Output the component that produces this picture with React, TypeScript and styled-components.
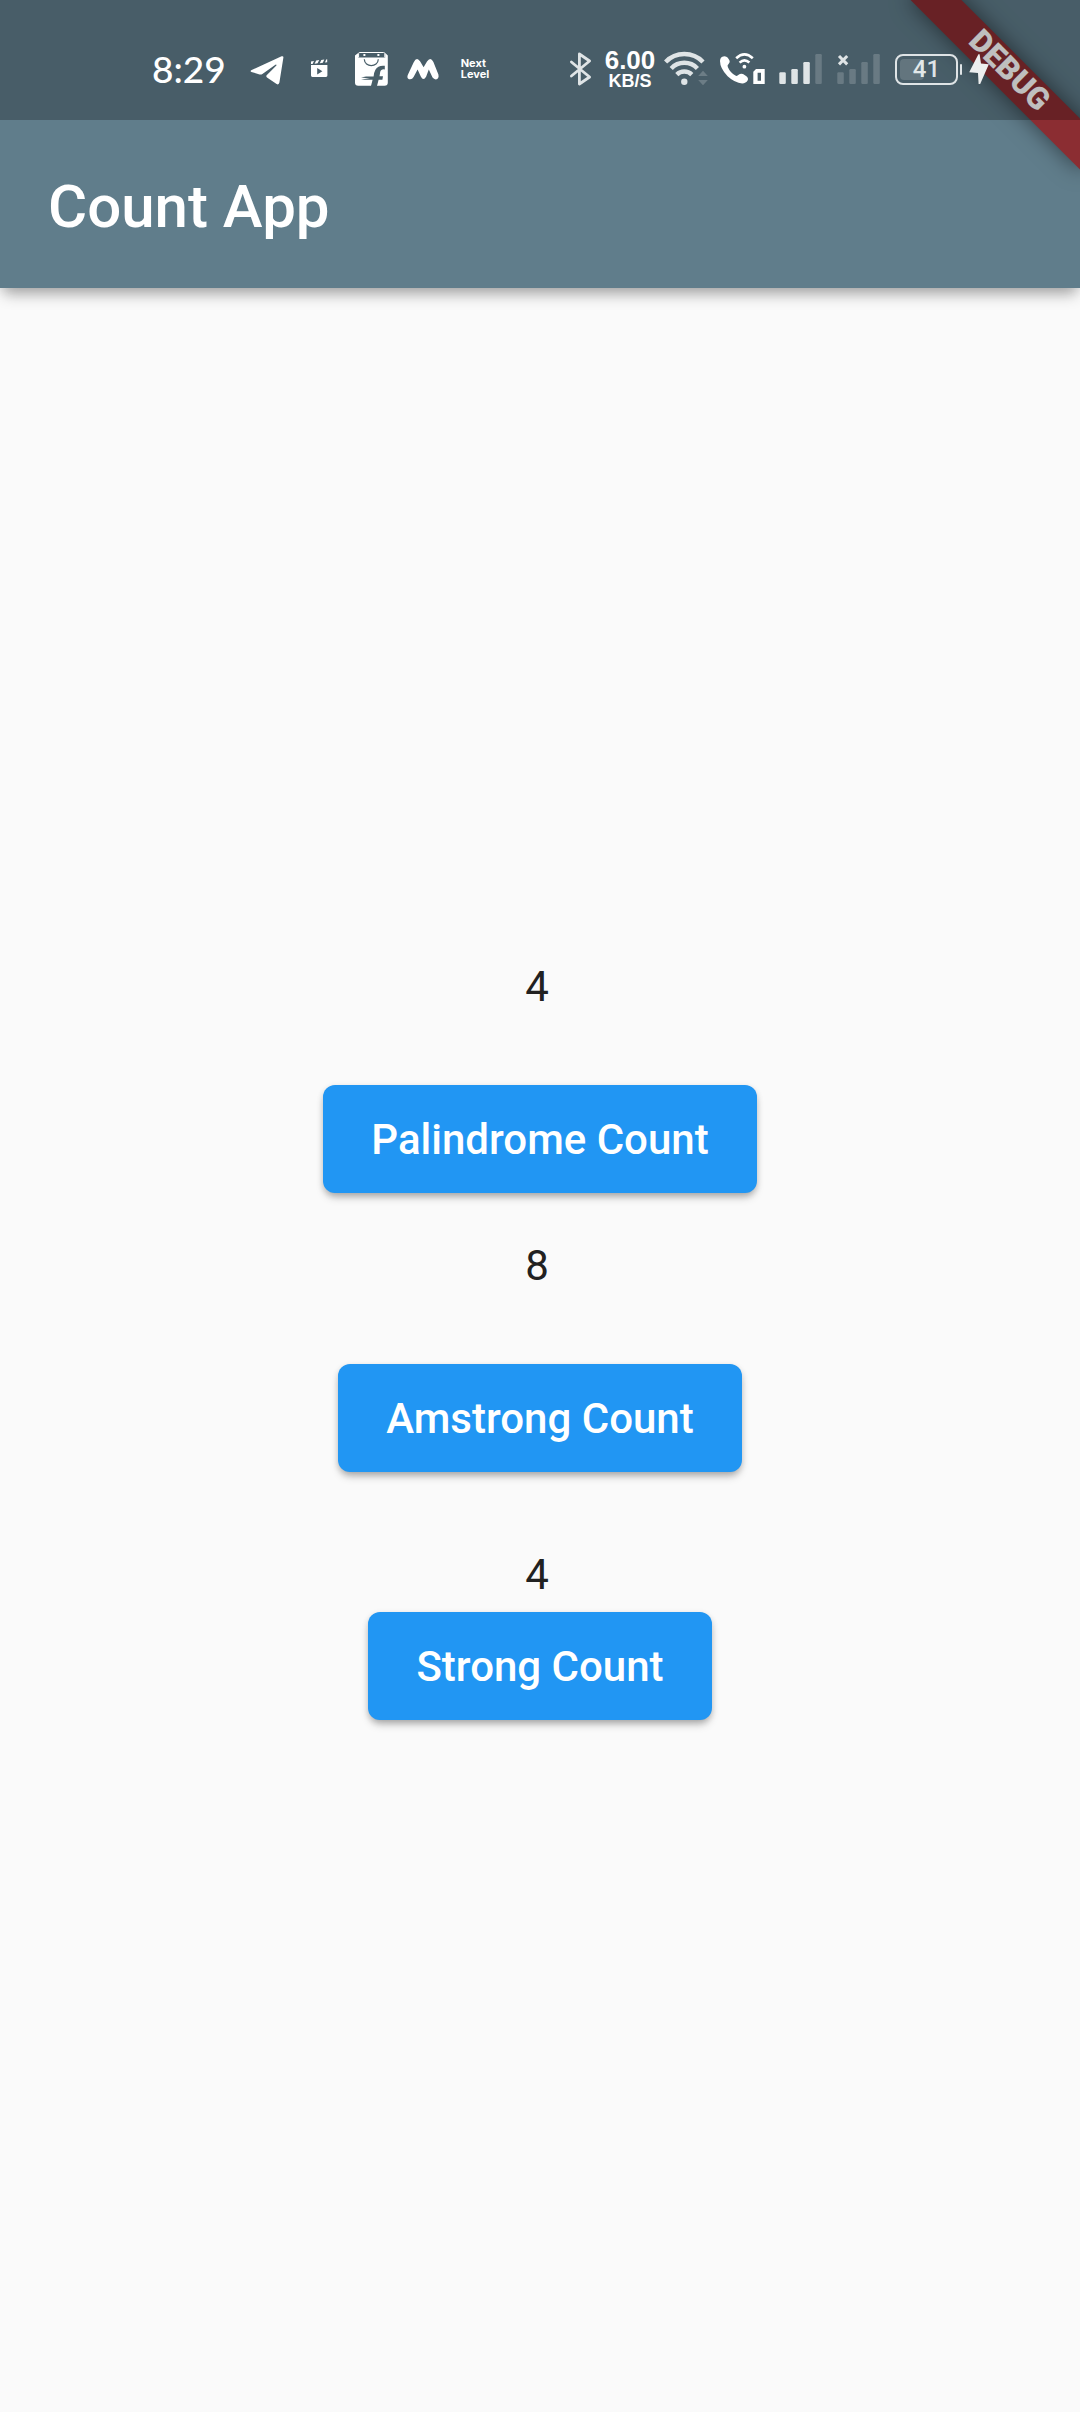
import React from "react";
import styled, { createGlobalStyle } from "styled-components";

const GlobalStyle = createGlobalStyle`
  *, *::before, *::after { box-sizing: border-box; }
  body {
    margin: 0;
    background: #fafafa;
    font-family: Roboto, "Noto Sans", sans-serif;
  }
`;

const Screen = styled.div`
  display: flex;
  flex-direction: column;
  min-height: 100vh;
  background: #fafafa;
`;

const Header = styled.header`
  position: relative;
  overflow: hidden;
  background: #607d8b;
  box-shadow: 0 10px 14px -4px rgba(0, 0, 0, 0.3), 0 2px 12px rgba(0, 0, 0, 0.1);
`;

const StatusBar = styled.div`
  position: relative;
  z-index: 1;
  display: flex;
  align-items: center;
  justify-content: space-between;
  height: 120px;
  padding: 18px 91px 0 152px;
  background: rgba(0, 0, 0, 0.25);
  color: #fff;
`;

const Cluster = styled.div<{ $gap: number }>`
  display: flex;
  align-items: center;
  gap: ${(p) => p.$gap}px;
`;

const Clock = styled.time`
  font: 500 37px/40px Lato, sans-serif;
`;

const Notice = styled.span`
  width: 36px;
  padding-left: 3px;
  font: 700 11px/11px Inter, sans-serif;
`;

const Speed = styled.div`
  display: flex;
  flex-direction: column;
  align-items: center;
  width: 54px;
`;

const SpeedValue = styled.span`
  font: 700 26px/24px "Liberation Sans", sans-serif;
`;

const SpeedUnit = styled.span`
  font: 700 18px/18px "Liberation Sans", sans-serif;
`;

const Battery = styled.div`
  display: flex;
  align-items: center;
  gap: 2px;
  width: 74px;
  padding-left: 6px;
`;

const BatteryCase = styled.div`
  position: relative;
  display: flex;
  align-items: center;
  justify-content: center;
  width: 63px;
  height: 31px;
  border: 2px solid #dfe4e6;
  border-radius: 8px;
  color: #dfe4e6;
  font-size: 24px;
  font-weight: 500;
  line-height: 24px;
`;

const BatteryLevel = styled.div`
  position: absolute;
  top: 3px;
  bottom: 3px;
  left: 3px;
  border-radius: 4px;
  background: rgba(255, 255, 255, 0.15);
`;

const BatteryTip = styled.div`
  width: 2px;
  height: 11px;
  border-radius: 1px;
  background: #dfe4e6;
`;

const Ribbon = styled.div`
  position: absolute;
  top: 54px;
  right: -48px;
  width: 240px;
  height: 36px;
  transform: rotate(45deg);
  background: #8b2d32;
  box-shadow: 0 0 22px rgba(0, 0, 0, 0.5);
  color: #fff;
  font-size: 31px;
  font-weight: 900;
  line-height: 32px;
  text-align: center;
`;

const TitleBar = styled.div`
  display: flex;
  align-items: center;
  height: 168px;
  padding: 6px 48px 0;
`;

const Title = styled.h1`
  margin: 0;
  color: #fff;
  font-size: 60px;
  font-weight: 500;
  line-height: 72px;
`;

const Content = styled.main`
  flex: 1;
  display: flex;
  flex-direction: column;
  align-items: center;
  justify-content: center;
  padding-bottom: 18px;
`;

const Counter = styled.section<{ $before: number; $gap: number }>`
  display: flex;
  flex-direction: column;
  align-items: center;
  gap: ${(p) => p.$gap}px;
  margin-top: ${(p) => p.$before}px;
`;

const Count = styled.output`
  padding-right: 6px;
  color: #212121;
  font-size: 42px;
  line-height: 49px;
`;

const CountButton = styled.button`
  height: 108px;
  padding: 0 48px;
  border: 0;
  border-radius: 12px;
  background: #2196f3;
  box-shadow: 0 6px 8px -2px rgba(0, 0, 0, 0.26), 0 2px 6px rgba(0, 0, 0, 0.14);
  color: #fff;
  font-family: inherit;
  font-size: 42px;
  font-weight: 500;
  line-height: 49px;
  cursor: pointer;
`;

const Glyph = styled.svg`
  display: block;
  flex: none;
  overflow: visible;
`;

const SOFT = "#dfe4e6";
const SHADE = "#485e68";

function TelegramIcon() {
  return (
    <Glyph width="36" height="34" viewBox="0 0 36 34" fill="#fff" aria-hidden="true">
      <path d="M1.2 18.3 31.6 4.3Q33.6 3.7 33.4 5.6L29.4 30.6Q28.8 33.2 26.6 32L17 25.4Q15.6 24.4 16.9 23.1L26.4 13.6Q26.8 12.2 25.4 12.8L12.4 22Q11 22.9 9.6 22.4L1.4 20Q-.2 19.2 1.2 18.3Z" />
    </Glyph>
  );
}

function ClapperIcon() {
  return (
    <Glyph width="36" height="34" viewBox="0 0 36 34" fill="#fff" aria-hidden="true">
      <path d="M9 9.5 12 9 10.6 12H9ZM14.2 8.6 17.2 8 15.6 11.3 12.6 11.8ZM19.3 8 22.3 7.4 20.8 10.8 17.8 11.2ZM24.2 7.4 25.2 7.2V10.2L23 10.6Z" />
      <path fillRule="evenodd" d="M9 13H25.4V23.6Q25.4 25 24 25H10.4Q9 25 9 23.6ZM15.2 16V22.4L20.4 19.2Z" />
    </Glyph>
  );
}

function BagIcon() {
  return (
    <Glyph width="36" height="34" viewBox="0 0 36 34" fill="none" aria-hidden="true">
      <path d="M4.6 5.3V1.6Q4.6.5 5.8.5H29.6Q30.8.5 30.8 1.6V5.3" stroke="#fff" strokeWidth="1" />
      <rect x="9.4" y="2" width="2" height="2" fill="#fff" />
      <rect x="23.4" y="2" width="2" height="2" fill="#fff" />
      <path d="M1 3.5 4.2 1V5.6H31.2V1L33.8 3.5V30.6Q33.8 33.8 30.6 33.8H4.2Q1 33.8 1 30.6Z" fill="#fff" />
      <path d="M10.3 7.2C10.6 15.8 24 15.8 24.3 7.2" stroke={SHADE} strokeWidth="1.2" />
      <path d="M30.8 13.8V17.4Q27 16.8 26.2 20L25.5 24.2H29L28.4 27.8H24.6L23 34H17L18.6 27.8H11L7 27.2 16 26.4 7 25.4 12 24.4H19.6Q20 20.4 21.4 17.8 24.2 13 30.8 13.8Z" fill={SHADE} />
    </Glyph>
  );
}

function MIcon() {
  return (
    <Glyph width="36" height="34" viewBox="0 0 36 34" aria-hidden="true">
      <path
        d="M2 22.5 7.6 10.4Q10.8 4 14.2 9.6L17.6 15.2 21 9.6Q24.4 4 27.4 10L32.4 22.4Q33.4 26.6 29.8 27.4 27 27.4 25.6 23.6L22.8 17.4 20.2 24.6Q17.4 29.6 14.8 24.6L11.6 17.4 7.6 25Q6 28 3 27.2.4 26 2 22.5Z"
        fill="#fff"
      />
    </Glyph>
  );
}

function BluetoothIcon() {
  return (
    <Glyph width="28" height="34" viewBox="0 0 28 34" fill="none" stroke={SOFT} strokeWidth="2.8" strokeLinecap="round" strokeLinejoin="round" aria-hidden="true">
      <path d="M2.4 10 20.6 25 10.4 32V2L20.6 9 2.4 24" />
    </Glyph>
  );
}

function WifiIcon() {
  return (
    <Glyph width="46" height="34" viewBox="0 0 46 34" fill="none" aria-hidden="true">
      <g stroke={SOFT} strokeWidth="4.4">
        <path d="M2.6 10A26 26 0 0 1 40 10" />
        <path d="M8.2 16.4A18 18 0 0 1 34.4 16.4" />
        <path d="M13.8 22.6A10.6 10.6 0 0 1 28.8 22.6" />
      </g>
      <circle cx="21.3" cy="29.7" r="3.2" fill={SOFT} />
      <path d="M35.2 24 40 18.8 44.8 24ZM35.2 28H44.8L40 33.2Z" fill="#fff" opacity=".2" />
    </Glyph>
  );
}

function WifiCallIcon() {
  return (
    <Glyph width="52" height="34" viewBox="0 0 52 34" fill="none" aria-hidden="true">
      <path
        d="M5 9Q5 5.2 8.2 4.4 11 3.6 12.8 5.8L14.4 8.2Q15.6 10.4 13.6 12 12 13.2 12.8 15 15 20.4 20.4 23.6 22 24.6 23.6 22.8 25.6 21 28 22L31.4 24.2Q33.8 26 32.6 28.6 31 31.4 27.2 31.4 20 31 12.6 24.2 5 16.4 5 9Z"
        fill="#fff"
      />
      <path d="M21.2 6.2Q29.4-1.6 37.8 6.2M24.6 10.6Q29.4 6.2 34.4 10.6" stroke="#fff" strokeWidth="2.6" />
      <circle cx="29.4" cy="14.7" r="1.9" fill="#fff" />
      <path fillRule="evenodd" d="M41 17H49.7V32H38.3V19.7ZM42.6 20.8V28.8H46V20.8Z" fill="#fff" />
    </Glyph>
  );
}

const BARS = [
  { x: 6.3, y: 20.3 },
  { x: 18.3, y: 17 },
  { x: 30.3, y: 10 },
  { x: 42.3, y: 2 },
];

function SignalIcon({ level, missing }: { level: number; missing?: boolean }) {
  return (
    <Glyph width="52" height="34" viewBox="0 0 52 34" aria-hidden="true">
      {BARS.map((bar, i) => (
        <rect
          key={bar.x}
          x={bar.x}
          y={bar.y}
          width="6.5"
          height={32 - bar.y}
          rx="1.2"
          fill={i < level ? SOFT : "rgba(255,255,255,.18)"}
        />
      ))}
      {missing && <path d="M8 4 16.2 12.4M16.2 4 8 12.4" stroke={SOFT} strokeWidth="3" />}
    </Glyph>
  );
}

function BoltIcon() {
  return (
    <Glyph width="20" height="34" viewBox="0 0 20 34" fill="#eceeef" aria-hidden="true">
      <path d="M9.4 2.2H10.6L12 11.4 19.8 12.2 11.2 32H9.6L9 21 .2 20.2Z" />
    </Glyph>
  );
}

const COUNTERS = [
  { id: "palindrome", label: "Palindrome Count", value: 4, before: 0, gap: 74 },
  { id: "amstrong", label: "Amstrong Count", value: 8, before: 48, gap: 74 },
  { id: "strong", label: "Strong Count", value: 4, before: 78, gap: 13 },
];

export default function App() {
  const charge = 41;
  return (
    <Screen>
      <GlobalStyle />
      <Header>
        <StatusBar>
          <Cluster $gap={24}>
            <Clock>8:29</Clock>
            <Cluster $gap={16}>
              <TelegramIcon />
              <ClapperIcon />
              <BagIcon />
              <MIcon />
              <Notice>
                Next
                <br />
                Level
              </Notice>
            </Cluster>
          </Cluster>
          <Cluster $gap={6}>
            <BluetoothIcon />
            <Speed>
              <SpeedValue>6.00</SpeedValue>
              <SpeedUnit>KB/S</SpeedUnit>
            </Speed>
            <WifiIcon />
            <WifiCallIcon />
            <SignalIcon level={3} />
            <SignalIcon level={0} missing />
            <Battery>
              <BatteryCase>
                <BatteryLevel style={{ width: `${charge}%` }} />
                {charge}
              </BatteryCase>
              <BatteryTip />
            </Battery>
            <BoltIcon />
          </Cluster>
        </StatusBar>
        <TitleBar>
          <Title>Count App</Title>
        </TitleBar>
        <Ribbon>DEBUG</Ribbon>
      </Header>
      <Content>
        {COUNTERS.map((c) => (
          <Counter key={c.id} $before={c.before} $gap={c.gap}>
            <Count htmlFor={c.id}>{c.value}</Count>
            <CountButton id={c.id} type="button">
              {c.label}
            </CountButton>
          </Counter>
        ))}
      </Content>
    </Screen>
  );
}
